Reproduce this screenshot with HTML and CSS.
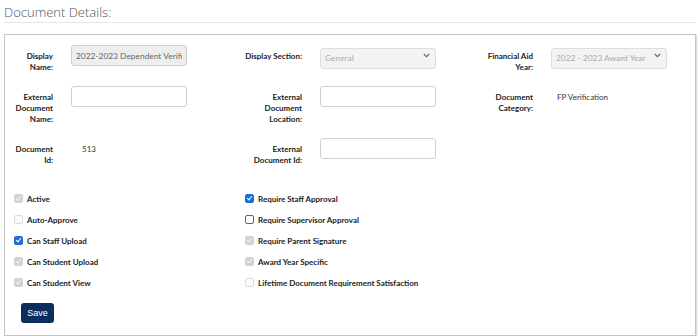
FILE: index.html
```html
<!DOCTYPE html>
<html lang="en">
<head>
  <meta charset="UTF-8">
  <title>Document Details</title>
  <link rel="stylesheet" href="styles.css">
</head>
<body>

<div class="page">
  <h2 class="page-title">Document Details:</h2>

  <div class="panel">
<div class="fields">
  <div class="field first">
    <label>Display Name:</label>
    <input type="text" class="text-input" value="2022-2023 Dependent Verification" disabled>
  </div>
  <div class="field">
    <label>Display Section:</label>
    <div class="select-wrap">
      <select class="select-input" disabled><option>General</option></select>
      <svg class="chevron" width="7" height="5" viewBox="0 0 7 5"><path d="M0.8 1 L3.5 3.7 L6.2 1" fill="none" stroke="#666" stroke-width="1.1"/></svg>
    </div>
  </div>
  <div class="field">
    <label>Financial Aid Year:</label>
    <div class="select-wrap">
      <select class="select-input" disabled><option>2022 - 2023 Award Year</option></select>
      <svg class="chevron" width="7" height="5" viewBox="0 0 7 5"><path d="M0.8 1 L3.5 3.7 L6.2 1" fill="none" stroke="#666" stroke-width="1.1"/></svg>
    </div>
  </div>

  <div class="field first">
    <label>External Document Name:</label>
    <input type="text" class="text-input">
  </div>
  <div class="field">
    <label>External Document Location:</label>
    <input type="text" class="text-input">
  </div>
  <div class="field">
    <label>Document Category:</label>
    <span class="value">FP Verification</span>
  </div>

  <div class="field first">
    <label>Document Id:</label>
    <span class="value">513</span>
  </div>
  <div class="field">
    <label>External Document Id:</label>
    <input type="text" class="text-input">
  </div>
</div>

<div class="checks">
  <div class="check-col">
    <label class="check"><input type="checkbox" checked disabled> Active</label>
    <label class="check"><input type="checkbox" disabled> Auto-Approve</label>
    <label class="check"><input type="checkbox" checked> Can Staff Upload</label>
    <label class="check"><input type="checkbox" checked disabled> Can Student Upload</label>
    <label class="check"><input type="checkbox" checked disabled> Can Student View</label>
  </div>
  <div class="check-col">
    <label class="check"><input type="checkbox" checked> Require Staff Approval</label>
    <label class="check"><input type="checkbox"> Require Supervisor Approval</label>
    <label class="check"><input type="checkbox" checked disabled> Require Parent Signature</label>
    <label class="check"><input type="checkbox" checked disabled> Award Year Specific</label>
    <label class="check"><input type="checkbox" disabled> Lifetime Document Requirement Satisfaction</label>
  </div>
</div>

<button class="save-btn">Save</button>
  </div>
</div>

</body>
</html>
```

FILE: styles.css
```css
body {
  margin: 0;
  padding: 0;
  background: white;
  font-family: Lato, "Open Sans", sans-serif;
  color: #222;
}
.page {
  padding: 0 4px;
}
.page-title {
  margin: 0;
  padding-top: 4px;
  height: 18px;
  font-family: "Open Sans", sans-serif;
  font-size: 13px;
  font-weight: 300;
  line-height: 17px;
  color: #555;
  border-bottom: 1px solid #e6e6e6;
}
.panel {
  margin-top: 11px;
  border: 1px solid #c4c4c4;
  box-shadow: 1px 1px 1px #dcdcdc;
  padding: 10px 9px 12px 9px;
}
.fields {
  display: grid;
  grid-template-columns: 235px 231px 1fr;
  row-gap: 13px;
  margin-left: -4px;
}
.field {
  display: flex;
  align-items: flex-start;
}
.field label {
  width: 57px;
  flex-shrink: 0;
  text-align: right;
  font-size: 8px;
  font-weight: 700;
  line-height: 11px;
  padding-top: 6px;
  margin-right: 18px;
}
.field.first label {
  width: 43px;
}
.text-input,
.select-input {
  width: 116px;
  height: 21px;
  box-sizing: border-box;
  border: 1px solid #cfcfcf;
  border-radius: 3px;
  background: white;
  font-family: Lato, sans-serif;
  font-size: 8.4px;
  color: #666;
  padding: 0 4px;
  margin: 0;
}
.text-input:disabled,
.select-input:disabled {
  background: #eeeeee;
  color: #666;
}
.select-wrap {
  position: relative;
}
.select-input {
  appearance: none;
  -webkit-appearance: none;
}
.select-input:disabled {
  color: #888;
}
.chevron {
  position: absolute;
  right: 6px;
  top: 8px;
}
.value {
  font-size: 8px;
  line-height: 11px;
  padding-top: 6px;
  padding-left: 6px;
  color: #333;
}
.field.first .value {
  padding-left: 11px;
}
.checks {
  display: grid;
  grid-template-columns: 231px 1fr;
  margin-top: 22px;
}
.check {
  display: flex;
  align-items: center;
  height: 21px;
  font-size: 8px;
  font-weight: 700;
  color: #222;
}
.check input {
  appearance: none;
  -webkit-appearance: none;
  width: 9px;
  height: 9px;
  margin: 0 4px 0 0;
  border: 1px solid #666;
  border-radius: 2px;
  background: white;
  box-sizing: border-box;
  position: relative;
}
.check input:checked {
  background: #1a6fd8;
  border-color: #1a6fd8;
}
.check input:checked::after {
  content: "";
  position: absolute;
  left: 2px;
  top: 0px;
  width: 2px;
  height: 4px;
  border: solid white;
  border-width: 0 1.3px 1.3px 0;
  transform: rotate(40deg);
}
.check input:disabled {
  border-color: #dcdcdc;
  background: #fbfbfb;
}
.check input:disabled:checked {
  background: #d3d3d3;
  border-color: #d3d3d3;
}
.check input:disabled:checked::after {
  border-color: #f0f0f0;
}
.save-btn {
  margin: 10px 0 0 7px;
  width: 33px;
  height: 20px;
  padding: 0;
  border: none;
  border-radius: 3px;
  background: #0b2e5f;
  color: white;
  font-family: "Liberation Sans", sans-serif;
  font-size: 9px;
  display: block;
  cursor: pointer;
}
```
